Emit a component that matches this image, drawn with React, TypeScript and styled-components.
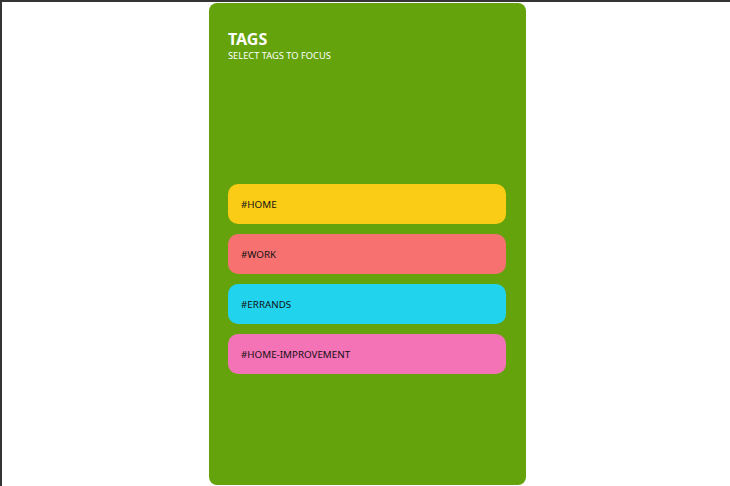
import React from 'react';
import styled, { createGlobalStyle } from 'styled-components';

const GlobalStyle = createGlobalStyle`
  html, body {
    margin: 0;
    padding: 0;
    background: #ffffff;
  }
  body {
    font-family: 'Noto Sans', 'Open Sans', sans-serif;
  }
`;

const Frame = styled.div`
  box-sizing: border-box;
  height: 486px;
  border-top: 2px solid #353535;
  border-left: 2px solid #353535;
  padding: 1px 0 0 3px;
  display: flex;
  justify-content: center;
  overflow: hidden;
`;

const Card = styled.div`
  box-sizing: border-box;
  width: 317px;
  height: 482px;
  background: #65a30d;
  border-radius: 8px;
  padding: 26px 20px 20px 19px;
  display: flex;
  flex-direction: column;
`;

const Header = styled.div`
  color: #ffffff;
  height: 155px;
`;

const Title = styled.h1`
  margin: 0;
  font-size: 16px;
  font-weight: 700;
  line-height: 20px;
`;

const Subtitle = styled.p`
  margin: 0;
  font-size: 9.3px;
  line-height: 13px;
`;

const TagList = styled.div`
  display: flex;
  flex-direction: column;
  gap: 10px;
`;

const Tag = styled.button<{ $color: string }>`
  box-sizing: border-box;
  height: 40px;
  width: 100%;
  border: 0;
  border-radius: 10px;
  background: ${(p) => p.$color};
  padding: 0 13px;
  display: flex;
  align-items: center;
  font-family: inherit;
  font-size: 9.8px;
  color: #111111;
  text-align: left;
  cursor: pointer;
`;

const tags = [
  { name: 'home', color: '#facc15' },
  { name: 'work', color: '#f87171' },
  { name: 'errands', color: '#22d3ee' },
  { name: 'home-improvement', color: '#f472b6' },
];

const App = () => (
  <>
    <GlobalStyle />
    <Frame>
      <Card>
        <Header>
          <Title>TAGS</Title>
          <Subtitle>SELECT TAGS TO FOCUS</Subtitle>
        </Header>
        <TagList>
          {tags.map((t) => (
            <Tag key={t.name} $color={t.color}>
              #{t.name.toUpperCase()}
            </Tag>
          ))}
        </TagList>
      </Card>
    </Frame>
  </>
);

export default App;
